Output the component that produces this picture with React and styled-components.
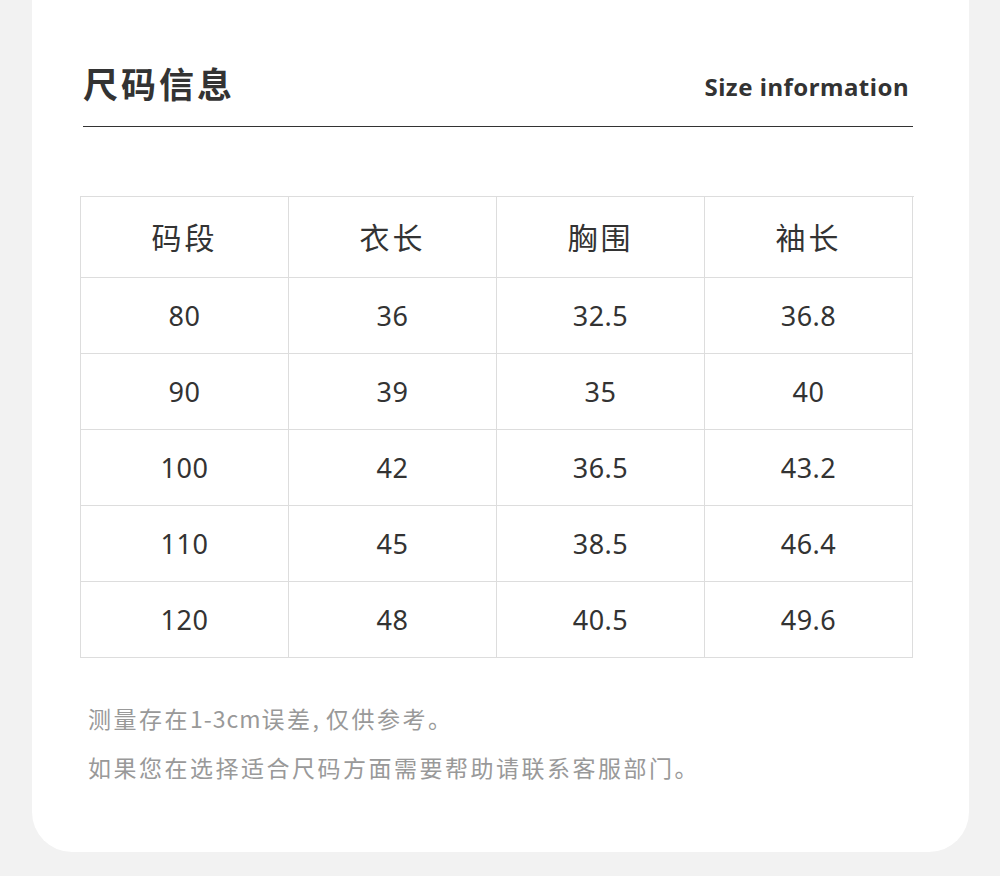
import React from 'react';
import styled, { createGlobalStyle } from "styled-components";

const GlobalStyle = createGlobalStyle`
    body {
        margin: 0;
        background: #f2f2f2;
        font-family: "Noto Sans", "Noto Sans CJK SC", sans-serif;
    }
`;

const Page = styled.div`
    width: 1000px;
    height: 876px;
    background: #f2f2f2;
    overflow: hidden;
`;

const Card = styled.div`
    margin: -40px 31px 0 32px;
    height: 892px;
    background: #fff;
    border-radius: 0 0 40px 40px;
    padding: 100px 56px 0 48px;
    box-sizing: border-box;
`;

const Header = styled.div`
    display: flex;
    justify-content: space-between;
    align-items: flex-end;
    margin-left: 3px;
    padding: 0 4px 20px 0;
    border-bottom: 1.5px solid #333;
`;

const Title = styled.h1`
    margin: 0;
    font: 700 35px "Noto Sans CJK SC", sans-serif;
    letter-spacing: 3px;
    color: #333;
    line-height: 46px;
`;

const SubTitle = styled.div`
    font: 700 24px "Noto Sans", sans-serif;
    letter-spacing: 0.5px;
    color: #333;
    line-height: 32px;
    margin-bottom: 3px;
`;

const Table = styled.div`
    margin-top: 69px;
    display: grid;
    grid-template-columns: repeat(4, 208px);
    border-top: 1px solid #ddd;
    border-left: 1px solid #ddd;
    width: 833px;
`;

const Cell = styled.div`
    height: ${p => (p.head ? 81 : 76)}px;
    border-right: 1px solid #ddd;
    border-bottom: 1px solid #ddd;
    display: flex;
    align-items: center;
    justify-content: center;
    color: #333;
    font: 400 ${p => (p.head ? 30 : 27)}px "Noto Sans", "Noto Sans CJK SC", sans-serif;
    letter-spacing: ${p => (p.head ? 3 : 0.5)}px;
    padding-bottom: ${p => (p.head ? 3 : 0)}px;
    box-sizing: border-box;
`;

const Notes = styled.div`
    margin-top: 36px;
    padding-left: 8px;
    color: #999;
    font: 400 23px "Noto Sans CJK SC", sans-serif;
    line-height: 49px;
    letter-spacing: 2.5px;
`;

const Latin = styled.span`
    letter-spacing: 1px;
`;

const head = ["码段", "衣长", "胸围", "袖长"];
const rows = [
    ["80", "36", "32.5", "36.8"],
    ["90", "39", "35", "40"],
    ["100", "42", "36.5", "43.2"],
    ["110", "45", "38.5", "46.4"],
    ["120", "48", "40.5", "49.6"],
];

export default function App() {
    return (
        <Page>
            <GlobalStyle />
            <Card>
                <Header>
                    <Title>尺码信息</Title>
                    <SubTitle>Size information</SubTitle>
                </Header>

                <Table>
                    {head.map(h => <Cell head key={h}>{h}</Cell>)}
                    {rows.map((r, i) =>
                        r.map((v, j) => <Cell key={i + "-" + j}>{v}</Cell>)
                    )}
                </Table>

                <Notes>
                    <div>测量存在<Latin>1-3cm</Latin>误差<Latin>, </Latin>仅供参考。</div>
                    <div>如果您在选择适合尺码方面需要帮助请联系客服部门。</div>
                </Notes>
            </Card>
        </Page>
    );
}
